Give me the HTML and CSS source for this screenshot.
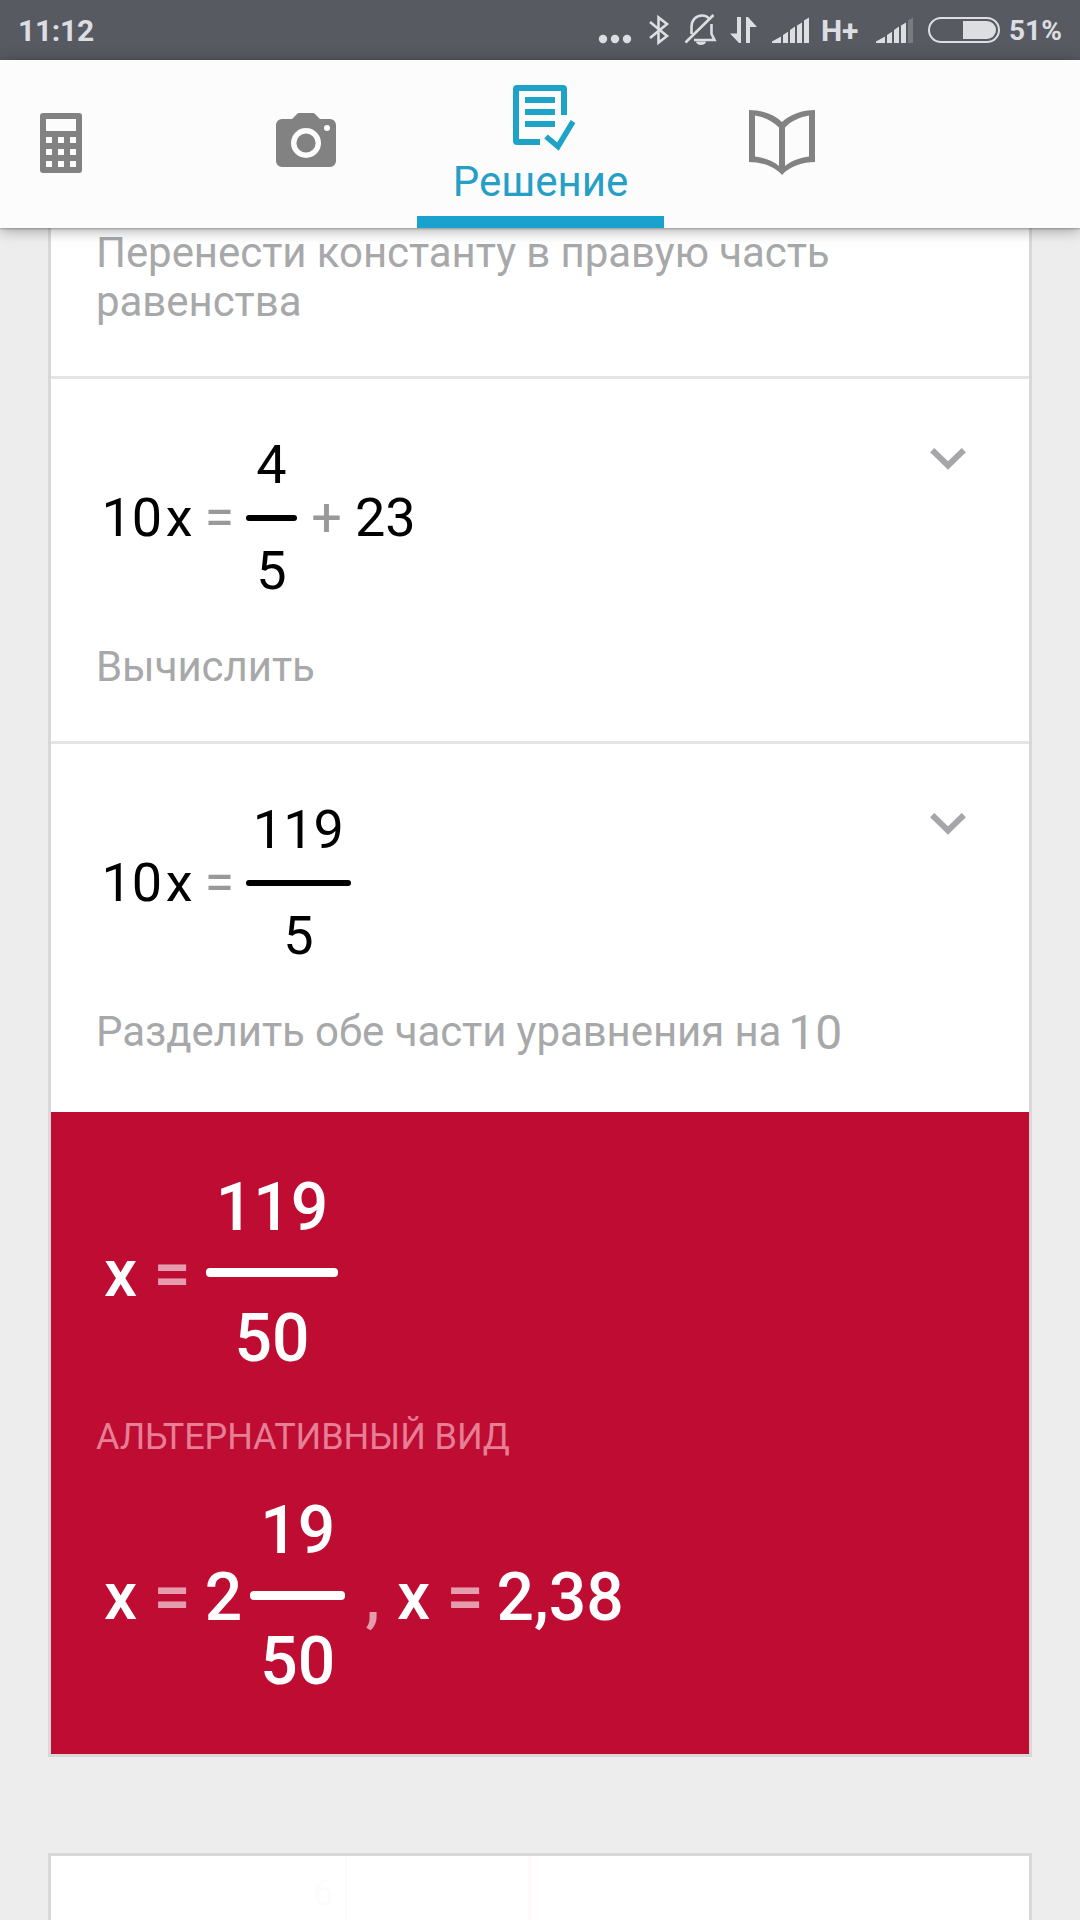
FILE: index.html
```html
<!DOCTYPE html>
<html lang="ru">
<head>
<meta charset="utf-8">
<title>Решение</title>
<link rel="stylesheet" href="styles.css">
</head>
<body>
<div class="screen">
  <div class="status-bar">
    <span class="clock">11:12</span>
    <div class="status-right">
      <svg width="212" height="60" viewBox="0 0 212 60">
        <g fill="#dcdee2">
          <circle cx="5" cy="39" r="4.2"/><circle cx="17" cy="39" r="4.2"/><circle cx="29" cy="39" r="4.2"/>
          <path d="M139 17h4v26h-2L132 33.500h7zM148 43V17h2L159 27h-7v16z"/>
          <path d="M174 43v-1.500l9-5V43zM185 35l5-3.200V43h-5zM192 30l5-3.500V43h-5zM199 25.500l5-3V43h-5zM206 20.500l5-3V43h-5z"/>
          <path d="M98 41.500a5 3.500 0 0 0 10 0z"/>
        </g>
        <g fill="none" stroke="#dcdee2" stroke-width="2.600">
          <path d="M52 22l17 14-8.500 6.500V17.500L69 24 52 38"/>
          <path d="M93.500 34V27c0-7 4.500-11.500 10.500-11.500 2.500 0 5 .8 6.500 2.500M113.500 24V34l3 6H96M87.500 42.500L115.500 15"/>
        </g>
      </svg>
      <span class="network">H+</span>
      <svg class="signal" width="38" height="60" viewBox="0 0 38 60" fill="#dcdee2">
        <path d="M0 43v-1.500l9-5V43zM11 35l5-3.200V43h-5zM18 30l5-3.500V43h-5zM25 25.500l5-3V43h-5z"/>
        <path d="M32 20.500l5-3V43h-5z" opacity=".25"/>
      </svg>
      <svg class="battery" width="72" height="60" viewBox="0 0 72 60">
        <rect x="1" y="18" width="70" height="24" rx="12" fill="none" stroke="#dcdee2" stroke-width="2"/>
        <path d="M35 21h24a9 9 0 0 1 0 18H35z" fill="#dcdee2"/>
      </svg>
      <span class="percent">51%</span>
    </div>
  </div>

  <nav class="tabs">
    <div class="tab tab-calc">
      <svg width="42" height="60" viewBox="0 0 42 60">
        <rect width="42" height="60" rx="3" fill="#828282"/>
        <path fill="#fcfcfc" d="M6 6h30v12H6zM6 24h6v6H6zM18 24h6v6h-6zM30 24h6v6h-6zM6 36h6v6H6zM18 36h6v6h-6zM30 36h6v6h-6zM6 48h6v6H6zM18 48h6v6h-6zM30 48h6v6h-6z"/>
      </svg>
    </div>
    <div class="tab tab-camera">
      <svg width="60" height="54" viewBox="0 0 60 54">
        <path fill="#828282" d="M6 6h10l5-5q1-1 2-1h14q1 0 2 1l5 5h10a6 6 0 0 1 6 6v36a6 6 0 0 1-6 6H6a6 6 0 0 1-6-6V12a6 6 0 0 1 6-6z"/>
        <circle cx="30" cy="30" r="12.300" fill="none" stroke="#fcfcfc" stroke-width="5.400"/>
        <circle cx="51" cy="15" r="3" fill="#fcfcfc"/>
      </svg>
    </div>
    <div class="tab tab-active">
      <svg width="63" height="66" viewBox="0 0 63 66" fill="none" stroke="#1ea2c8" stroke-width="6">
        <path d="M27 57H4a1 1 0 0 1-1-1V4a1 1 0 0 1 1-1h46a1 1 0 0 1 1 1v26M12 15h30M12 27h30M12 39h30"/>
        <path d="M33 51.500l12 10L60 36.500" stroke-width="5.500"/>
      </svg>
      <span class="tab-label">Решение</span>
    </div>
    <div class="tab tab-book">
      <svg width="66" height="65" viewBox="0 0 66 65" fill="#828282" fill-rule="evenodd">
        <path d="M0 0C13 0 25 4.500 33 12 41 4.500 53 0 66 0V52C54 52 41 56 33 65 25 56 12 52 0 52zM6 5.500V46.500C15 47.500 24 51 30 56V17.500C24 11 15 7 6 5.500zM60 5.500C51 7 42 11 36 17.500V56C42 51 51 47.500 60 46.500z"/>
      </svg>
    </div>
  </nav>

  <main class="content">
    <article class="card">
      <section class="step step-first">
        <p class="caption">Перенести константу в правую часть равенства</p>
      </section>
      <section class="step">
        <div class="step-row">
          <div class="math">
            <span class="num">10</span><span class="var">x</span><span class="op">=</span>
            <span class="frac frac-digit"><span>4</span><i class="bar"></i><span>5</span></span>
            <span class="op plus">+</span><span class="after-op">23</span>
          </div>
          <svg class="chevron" width="36" height="22" viewBox="0 0 36 22" fill="none" stroke="#a6a6aa" stroke-width="6"><path d="M2.200 2.200L18 17.500 33.800 2.200"/></svg>
        </div>
        <p class="caption">Вычислить</p>
      </section>
      <section class="step step-last">
        <div class="step-row">
          <div class="math">
            <span class="num">10</span><span class="var">x</span><span class="op">=</span>
            <span class="frac frac-wide"><span>119</span><i class="bar"></i><span>5</span></span>
          </div>
          <svg class="chevron" width="36" height="22" viewBox="0 0 36 22" fill="none" stroke="#a6a6aa" stroke-width="6"><path d="M2.200 2.200L18 17.500 33.800 2.200"/></svg>
        </div>
        <p class="caption caption-math">Разделить обе части уравнения на<span class="caption-num">10</span></p>
      </section>
      <section class="result">
        <div class="math math-result">
          <span class="res-x">x</span><span class="op">=</span>
          <span class="frac frac-result"><span>119</span><i class="bar"></i><span>50</span></span>
        </div>
        <h2 class="alt-title">АЛЬТЕРНАТИВНЫЙ ВИД</h2>
        <div class="math math-result">
          <span class="res-x">x</span><span class="op">=</span>
          <span class="whole">2</span>
          <span class="frac frac-mixed"><span>19</span><i class="bar"></i><span>50</span></span>
          <span class="comma">,</span>
          <span class="res-x second">x</span><span class="op">=</span><span class="whole decimal">2,38</span>
        </div>
      </section>
    </article>

    <article class="card graph-card">
      <svg width="978" height="64" viewBox="0 0 978 64">
        <path d="M294 0h2v64h-2z" fill="#fcfcfc"/>
        <path d="M477 0h4v64h-4z" fill="#fffafa"/>
        <text x="262" y="49" class="graph-label">6</text>
      </svg>
    </article>
  </main>
</div>
</body>
</html>
```
FILE: styles.css
```css
body {
  margin: 0;
  background: #ededed;
  font-family: Roboto, sans-serif;
}
p, h2 { margin: 0; font-weight: 400; }
svg { display: block; flex: none; }

.screen {
  display: flex;
  flex-direction: column;
  width: 1080px;
  height: 1920px;
  overflow: hidden;
}

/* Status bar */
.status-bar {
  display: flex;
  flex: none;
  justify-content: space-between;
  height: 60px;
  line-height: 61px;
  padding: 0 18px;
  background: #585a62;
  color: #dcdee2;
  font-weight: 700;
}
.clock { font-size: 30px; letter-spacing: -.3px; }
.status-right { display: flex; }
.network { width: 43px; margin-left: 11px; font-size: 30px; letter-spacing: -.3px; }
.signal { margin-left: 12px; }
.battery { margin-left: 14px; }
.percent { width: 53px; margin-left: 9px; font-size: 28px; }

/* Tabs */
.tabs {
  display: grid;
  grid-template-columns: 122px 295px 247px 236px;
  flex: none;
  height: 168px;
  position: relative;
  background: #fcfcfc;
  box-shadow: 0 2px 14px rgba(0, 0, 0, .35), 0 1px 2px rgba(0, 0, 0, .25);
}
.tab {
  display: flex;
  flex-direction: column;
  align-items: center;
  box-sizing: border-box;
}
.tab-calc { padding-top: 53px; }
.tab-camera { padding: 53px 0 0 73px; }
.tab-active {
  padding-top: 25px;
  border-bottom: 12px solid #1aa2ce;
}
.tab-active svg { margin-left: 7px; }
.tab-label {
  margin-top: 6px;
  color: #259fc6;
  font-size: 42px;
  line-height: 49px;
}
.tab-book { padding-top: 50px; }

/* Cards */
.content { padding: 0 48px; }
.card {
  background: #fff;
  border: 3px solid #d8d8d8;
  border-top: 0;
}
.step {
  height: 258px;
  padding: 54px 45px 50px;
  border-top: 3px solid #e4e4e4;
}
.step-first { height: auto; padding-top: 0; border-top: 0; }
.step-last { height: 263px; padding-bottom: 51px; }
.step-row { display: flex; justify-content: space-between; }
.chevron { margin: 15px 18px 0 0; }
.caption {
  margin-top: 39px;
  color: #a7a8aa;
  font-size: 42px;
  line-height: 49px;
  letter-spacing: -.06px;
}
.step-first .caption { margin-top: 0; }
.caption-math { display: flex; letter-spacing: -.09px; }
.caption-num {
  margin: 1px 0 0 7px;
  font-size: 48px;
}

/* Math expressions */
.math {
  display: flex;
  align-items: center;
  padding-left: 5.5px;
  font-size: 54px;
  line-height: 64px;
  color: #000;
}
.math .var { margin-left: 3.5px; }
.math .op { margin-left: 12px; color: #999; }
.math .plus { margin-left: 14px; }
.after-op { margin-left: 13px; }
.frac {
  display: flex;
  flex-direction: column;
  align-items: center;
  gap: 18px;
  margin-left: 12.200px;
}
.frac span { margin-left: -1px; }
.bar {
  width: 100%;
  height: 6px;
  border-radius: 3px;
  background: currentColor;
}
.frac-digit { width: 51px; }
.frac-wide { width: 105px; }

/* Result */
.result {
  height: 532px;
  padding: 56px 45px 54px;
  background: #be0c32;
}
.math-result {
  padding-left: 8px;
  color: #fff;
  font-size: 66px;
  font-weight: 500;
  line-height: 78px;
}
.math-result .frac { gap: 22px; }
.math-result .frac span { position: relative; top: 1px; margin-left: 0; }
.math-result .bar { height: 9px; border-radius: 4px; }
.res-x { width: 34px; margin-top: 3px; }
.math-result .op { margin: 4px 0 0 15.500px; color: rgba(255, 255, 255, .6); }
.math-result .frac-result { width: 132px; margin-left: 15.500px; }
.whole { margin: 4px 0 0 14px; }
.math-result .frac-mixed { width: 95px; margin-left: 8px; }
.comma { margin: 4px 0 0 20px; color: rgba(255, 255, 255, .6); }
.second { margin-left: 17px; }
.decimal { margin-left: 13px; }
.alt-title {
  margin: 39px 0 33px;
  color: #e67f95;
  font-size: 36px;
  line-height: 42px;
  letter-spacing: -.1px;
}

/* Graph card */
.graph-card { margin-top: 96px; border-top: 3px solid #d8d8d8; }
.graph-label { font-size: 36px; fill: #fcfcfc; }
```
